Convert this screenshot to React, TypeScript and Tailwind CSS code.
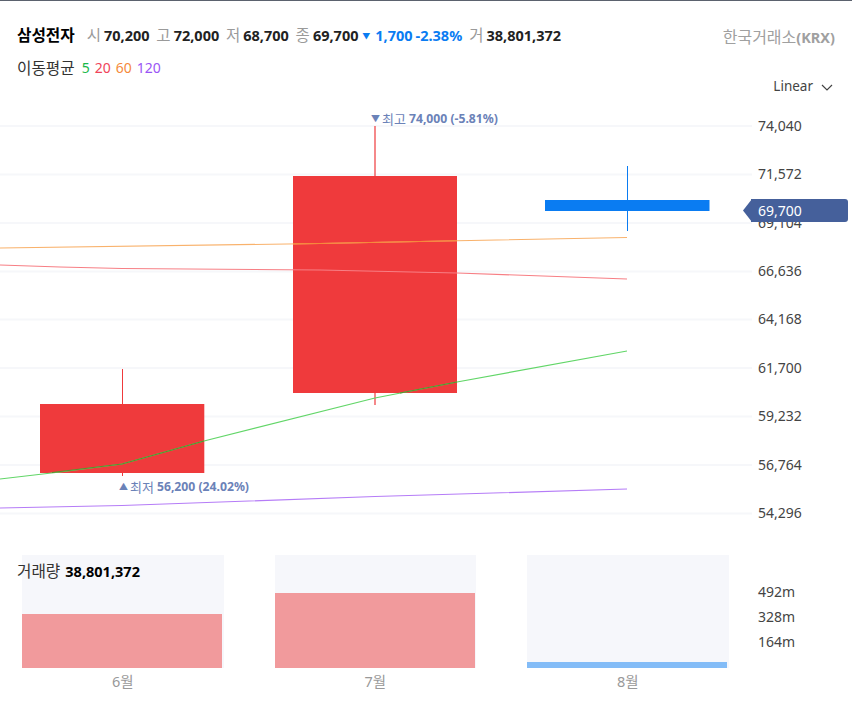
const yLabels = [
  { v: '74,040', y: 126 },
  { v: '71,572', y: 174.5 },
  { v: '69,104', y: 223 },
  { v: '66,636', y: 271.5 },
  { v: '64,168', y: 319.5 },
  { v: '61,700', y: 368 },
  { v: '59,232', y: 416.5 },
  { v: '56,764', y: 465 },
  { v: '54,296', y: 513.5 },
]

const stats = [
  { k: '시', v: '70,200' },
  { k: '고', v: '72,000' },
  { k: '저', v: '68,700' },
  { k: '종', v: '69,700' },
]

const volumes = [
  { month: '6월', h: 'h-[54px]', bar: 'bg-[#f19a9c]' },
  { month: '7월', h: 'h-[75px]', bar: 'bg-[#f19a9c]' },
  { month: '8월', h: 'h-[6px]', bar: 'bg-[#83bcf7]' },
]

function MainChart() {
  return (
    <svg width="852" height="435" viewBox="0 100 852 435" className="block">
      {/* grid */}
      {yLabels.map((l) => (
        <line key={l.v} x1="0" x2="752" y1={l.y} y2={l.y} stroke="#f6f7fa" strokeWidth="2" />
      ))}
      {/* 6월 */}
      <line x1="122.5" x2="122.5" y1="369" y2="476" stroke="#ef3a3c" />
      <rect x="40" y="404" width="164.3" height="69" fill="#ef3a3c" />
      {/* 7월 */}
      <line x1="375" x2="375" y1="126" y2="405" stroke="#ef3a3c" strokeWidth="1.2" />
      <rect x="293" y="176" width="164" height="217" fill="#ef3a3c" />
      {/* 8월 */}
      <rect x="545" y="200" width="164.5" height="11" fill="#0a7cf2" />
      <line x1="627.5" x2="627.5" y1="166" y2="231" stroke="#0a7cf2" />
      {/* 이동평균 */}
      <polyline points="0,248 320,243.5 457,240.8 627,237.5" fill="none" stroke="#f9b26c" strokeWidth="1.1" />
      <polyline points="0,265 60,267 122,268.5 320,270 457,273 627,279" fill="none" stroke="#f77f85" strokeWidth="1.1" />
      <polyline points="0,479 60,472 122,464 204,441 375,398 457,382 627,351" fill="none" stroke="#62d668" strokeWidth="1.2" />
      <polyline points="0,508 122,505.5 375,496.5 627,489" fill="none" stroke="#b57cf7" strokeWidth="1.2" />
      {/* 캔들 위 겹치는 구간 */}
      <polyline points="293,243.9 320,243.5 457,240.8" fill="none" stroke="#f6863a" strokeWidth="1.1" />
      <polyline points="52,472.5 122,464 204,441" fill="none" stroke="#5b8f2d" strokeWidth="1.2" />
      <polyline points="400,393 457,382" fill="none" stroke="#5b8f2d" strokeWidth="1.2" />
    </svg>
  )
}

export default function App() {
  return (
    <div className="relative w-[852px] h-[722px] bg-white border-t border-[#5b626e] font-['Noto_Sans','Noto_Sans_CJK_KR',sans-serif] overflow-hidden">
      {/* Header */}
      <div className="h-[99px] pl-[17px] pr-[17px] relative">
        <div className="flex justify-between items-start pt-[23px]">
          <div className="flex items-center text-[14.5px] leading-[20px] whitespace-nowrap">
            <span className="text-[15.7px] font-bold text-black mr-[12px]">삼성전자</span>
            {stats.map((s) => (
              <span key={s.k} className="mr-[6.75px]">
                <span className="text-[15.5px] text-[#9a9a9a] mr-[3px]">{s.k}</span>
                <span className="font-bold text-[#222222]">{s.v}</span>
              </span>
            ))}
            <span className="text-[#0a7cf2] font-bold flex items-center -ml-[3px]">
              <span className="text-[8px] mt-[2px] mr-[5px]">▼</span>
              <span className="mr-[3px]">1,700</span>
              <span>-2.38%</span>
            </span>
            <span className="text-[15.5px] text-[#9a9a9a] ml-[7px] mr-[3px]">거</span>
            <span className="font-bold text-[#222222]">38,801,372</span>
          </div>
          <span className="text-[16px] leading-[20px] text-[#a0a0a0] mt-[3px]">
            한국거래소<span className="text-[14.5px] font-bold">(KRX)</span>
          </span>
        </div>
        <div className="flex items-center mt-[11px] text-[14px] leading-[20px]">
          <span className="text-[15.7px] text-[#333333] mr-[7px]">이동평균</span>
          <span className="text-[#19b84a] mr-[5px]">5</span>
          <span className="text-[#f0445a] mr-[5px]">20</span>
          <span className="text-[#f58a3c] mr-[5px]">60</span>
          <span className="text-[#9a55f5]">120</span>
        </div>
        <div className="absolute right-[19px] top-[75px] flex items-center gap-[8px] text-[13.5px] leading-[20px] text-[#444444]">
          Linear
          <svg width="12" height="7" viewBox="0 0 12 7" fill="none" stroke="#444444" strokeWidth="1.2" className="mt-[2px]">
            <path d="M1 1l5 5 5-5" />
          </svg>
        </div>
      </div>

      {/* Chart */}
      <div className="relative h-[435px]">
        <MainChart />
        {yLabels.map((l) => (
          <span
            key={l.v}
            className="absolute left-[758px] text-[14px] leading-[20px] text-[#444444]"
            style={{ top: l.y - 110.5 }}
          >
            {l.v}
          </span>
        ))}
        <div className="absolute left-[743px] top-[99px] h-[23px] w-[105px] flex items-center">
          <svg width="9" height="23" viewBox="0 0 9 23" className="shrink-0 -mr-px">
            <path d="M9 0L0 11.5 9 23z" fill="#45609b" />
          </svg>
          <span className="flex-1 h-full bg-[#45609b] rounded-r-[3px] text-white text-[14px] leading-[23px] pl-[7px]">69,700</span>
        </div>
        <span className="absolute left-[371px] top-[9.5px] flex items-center text-[12.2px] leading-[18px] font-bold text-[#6b82b8] whitespace-nowrap">
          <span className="text-[9px] mr-[2px]">▼</span>
          <span className="text-[13px] font-normal mr-[3px]">최고</span>
          74,000 (-5.81%)
        </span>
        <span className="absolute left-[119px] top-[378px] flex items-center text-[12.2px] leading-[18px] font-bold text-[#6b82b8] whitespace-nowrap">
          <span className="text-[9px] mr-[2px]">▲</span>
          <span className="text-[13px] font-normal mr-[3px]">최저</span>
          56,200 (24.02%)
        </span>
      </div>

      {/* Volume */}
      <div className="relative flex mt-[20px] pl-[22px] gap-[51px] h-[167px]">
        {volumes.map((c) => (
          <div key={c.month} className="w-[201.5px]">
            <div className="h-[113px] bg-[#f6f7fb] flex items-end">
              <div className={`w-[200px] ${c.h} ${c.bar}`} />
            </div>
            <div className="text-center text-[14.5px] leading-[20px] text-[#999999] mt-[3px]">{c.month}</div>
          </div>
        ))}
        <div className="absolute left-[17px] top-[6px] flex text-[14.5px] leading-[20px] text-[#333333] whitespace-nowrap">
          <span className="text-[15.7px] mr-[5px]">거래량</span>
          <span className="font-bold text-black">38,801,372</span>
        </div>
        <div className="absolute left-[758px] top-[27px] flex flex-col gap-[5px] text-[14px] leading-[20px] text-[#444444]">
          <span>492m</span>
          <span>328m</span>
          <span>164m</span>
        </div>
      </div>
    </div>
  )
}
